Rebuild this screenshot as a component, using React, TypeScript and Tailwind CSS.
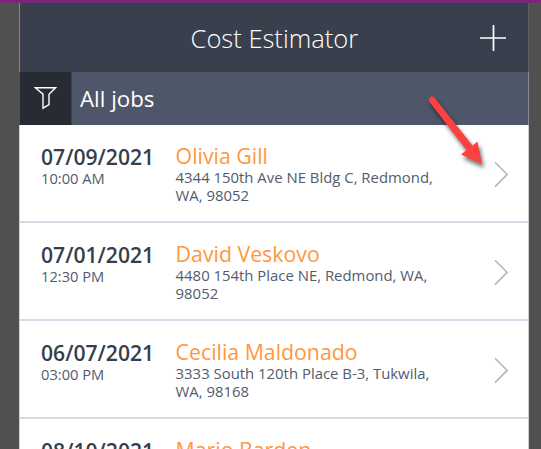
interface Job {
  date: string;
  time: string;
  name: string;
  address: string[];
}

const jobs: Job[] = [
  { date: '07/09/2021', time: '10:00 AM', name: 'Olivia Gill', address: ['4344 150th Ave NE Bldg C, Redmond,', 'WA, 98052'] },
  { date: '07/01/2021', time: '12:30 PM', name: 'David Veskovo', address: ['4480 154th Place NE, Redmond, WA,', '98052'] },
  { date: '06/07/2021', time: '03:00 PM', name: 'Cecilia Maldonado', address: ['3333 South 120th Place B-3, Tukwila,', 'WA, 98168'] },
  { date: '08/10/2021', time: '', name: 'Mario Barden', address: [] },
];

function JobRow({ job }: { job: Job }) {
  return (
    <li className="flex h-[98px] shrink-0 border-b-2 border-[#d5dae7] pl-[21px] pt-[17px]">
      <div className="w-[134.6px] shrink-0 whitespace-nowrap text-[#363d4b]">
        <div className="pt-px text-[21.15px] font-semibold leading-[28px]">{job.date}</div>
        <div className="-mt-px text-[14.7px] leading-[16px] text-[#535c6d]">{job.time}</div>
      </div>
      <div className="w-[300px] shrink-0 whitespace-nowrap">
        <div className="text-[21.3px] leading-[28px] text-[#ff9740]">{job.name}</div>
        <div className="-mt-px text-[14.9px] leading-[17.5px] text-[#535c6d]">
          {job.address.map((line) => (
            <div key={line}>{line}</div>
          ))}
        </div>
      </div>
      <svg className="ml-[17.4px] mt-[18px] h-7 w-4 shrink-0" viewBox="0 0 16 28" fill="none" stroke="#b5b5b5" strokeWidth="1.5">
        <path d="M2 2.2 14.2 14.4 2 26.6" />
      </svg>
    </li>
  );
}

export default function App() {
  return (
    <div className="relative flex h-[449px] w-[541px] flex-col overflow-hidden bg-[#505050] font-['Open_Sans',sans-serif]">
      <div className="h-[3px] shrink-0 bg-[#782878]" />
      <main className="ml-[19px] flex min-h-0 w-[510px] flex-1 flex-col bg-white">
        <header className="flex h-[69px] shrink-0 items-center border-l border-r border-l-[#858890] border-r-[#5d616b] bg-[#393f4c]">
          <h1 className="ml-[170.6px] w-[289.4px] whitespace-nowrap text-[25.5px] font-light leading-[34px] text-white">Cost Estimator</h1>
          <svg className="h-[26px] w-[26px]" viewBox="0 0 26 26" fill="none" stroke="white" strokeWidth="1.7">
            <path d="M13.5 0v26M0 13h26" />
          </svg>
        </header>
        <div className="flex h-[53px] shrink-0 border-l border-r border-l-[#4a4d55] border-r-[#858b98] bg-[#4e566a] text-white">
          <div className="w-[52px] border-r border-[#3b4150] bg-[#272b34] pl-[14px] pt-[14px]">
            <svg className="h-6 w-6" viewBox="0 0 24 24" fill="none" stroke="white" strokeWidth="1.4">
              <path d="M1.2 1.7h20.4L15 8.2v10.5L9 22.2v-14z" />
            </svg>
          </div>
          <div className="pl-2 pt-[11px] text-[22.3px] leading-[32px]">All jobs</div>
        </div>
        <ul className="min-h-0 flex-1 overflow-hidden border-l border-r border-[#cfcfd2]">
          {jobs.map((job) => (
            <JobRow key={job.date} job={job} />
          ))}
        </ul>
      </main>
      <svg className="absolute left-[415px] top-[85px] h-[95px] w-[80px] overflow-visible" viewBox="0 0 80 95">
        <path
          className="drop-shadow-[2px_4px_2px_rgba(0,0,0,0.55)]"
          d="M14.2 13.3a3.2 3.2 0 0 1 5.5-.4L57.5 60.5 62.5 56.5 67 79 46 69.5 51.5 65 14.7 17.2a3.2 3.2 0 0 1-.5-3.9z"
          fill="#fd4141"
        />
      </svg>
    </div>
  );
}
